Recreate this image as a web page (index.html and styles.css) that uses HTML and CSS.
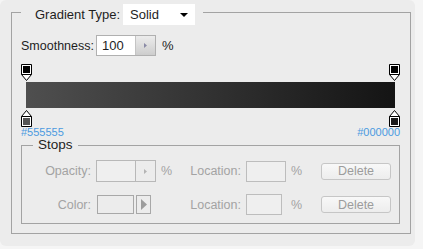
FILE: index.html
```html
<!DOCTYPE html>
<html lang="en">
<head>
  <meta charset="UTF-8">
  <title>Gradient Editor</title>
  <link rel="stylesheet" href="styles.css">
</head>
<body>

<div class="panel">
  <fieldset class="group">
    <legend class="group-title">
      <span>Gradient Type:</span>
      <div class="select">
        <span>Solid</span>
        <svg width="8" height="4" viewBox="0 0 8 4"><path d="M0 0H8L4 4Z" fill="#000"/></svg>
      </div>
    </legend>

    <div class="field-row">
      <label class="field-label">Smoothness:</label>
      <div class="spin">
        <span class="spin-value">100</span>
        <span class="spin-btn"><svg width="3" height="5" viewBox="0 0 3 5"><path d="M0 0L3 2.5L0 5Z" fill="#8a8aa6"/></svg></span>
      </div>
      <span class="unit">%</span>
    </div>

    <div class="gradient">
      <div class="markers">
        <svg width="11" height="17" viewBox="0 0 11 17">
          <path d="M0.5 0.5H10.5V10.5L5.5 16.5L0.5 10.5Z" fill="#fff" stroke="#000"/>
          <path d="M0.5 10.5H10.5" stroke="#000"/>
          <rect x="2" y="2" width="7" height="7" fill="#000"/>
        </svg>
        <svg width="11" height="17" viewBox="0 0 11 17">
          <path d="M0.5 0.5H10.5V10.5L5.5 16.5L0.5 10.5Z" fill="#fff" stroke="#000"/>
          <path d="M0.5 10.5H10.5" stroke="#000"/>
          <rect x="2" y="2" width="7" height="7" fill="#000"/>
        </svg>
      </div>
      <div class="gradient-bar"></div>
      <div class="markers bottom">
        <svg width="11" height="17" viewBox="0 0 11 17">
          <path d="M5.5 0.5L10.5 6.5V16.5H0.5V6.5Z" fill="#fff" stroke="#000"/>
          <path d="M0.5 6.5H10.5" stroke="#000"/>
          <rect x="2" y="8" width="7" height="7" fill="#555"/>
        </svg>
        <svg width="11" height="17" viewBox="0 0 11 17">
          <path d="M5.5 0.5L10.5 6.5V16.5H0.5V6.5Z" fill="#fff" stroke="#000"/>
          <path d="M0.5 6.5H10.5" stroke="#000"/>
          <rect x="2" y="8" width="7" height="7" fill="#1a1a1a"/>
        </svg>
      </div>
      <div class="stop-labels">
        <span>#555555</span>
        <span>#000000</span>
      </div>
    </div>

    <fieldset class="group stops">
      <legend class="stops-title">Stops</legend>

      <div class="stop-row">
        <span class="stop-label">Opacity:</span>
        <div class="spin disabled">
          <span class="spin-value"></span>
          <span class="spin-btn"><svg width="3" height="5" viewBox="0 0 3 5"><path d="M0 0L3 2.5L0 5Z" fill="#b4b4b4"/></svg></span>
        </div>
        <span class="stop-unit">%</span>
        <span class="stop-label">Location:</span>
        <div class="box"></div>
        <span class="stop-unit">%</span>
        <button class="delete">Delete</button>
      </div>

      <div class="stop-row">
        <span class="stop-label">Color:</span>
        <div class="swatch-group">
          <div class="swatch"></div>
          <div class="swatch-btn"><svg width="6" height="11" viewBox="0 0 6 11"><path d="M0 0L6 5.5L0 11Z" fill="#9c9c9c"/></svg></div>
        </div>
        <span class="stop-unit"></span>
        <span class="stop-label">Location:</span>
        <div class="box short"></div>
        <span class="stop-unit">%</span>
        <button class="delete">Delete</button>
      </div>
    </fieldset>
  </fieldset>
</div>

</body>
</html>
```

FILE: styles.css
```css
html, body {
  margin: 0;
  padding: 0;
  background-color: #f5f5f5;
  font-family: "Liberation Sans", Arial, sans-serif;
  font-size: 12.5px;
  color: #1e1e1e;
}

.panel {
  width: 415px;
  height: 246px;
  box-sizing: border-box;
  padding: 0 4px 0 11px;
  background-color: #ececec;
  border-radius: 6px;
}

.group {
  margin: 0;
  padding: 10px 10px 9px 9px;
  border: 1px solid #a3a3a3;
  min-width: 0;
}

.group-title {
  display: flex;
  align-items: center;
  gap: 3px;
  padding: 4px 8px 0 14px;
  font-size: 13px;
}

.select {
  width: 72px;
  height: 21px;
  box-sizing: border-box;
  padding: 0 7px;
  display: flex;
  align-items: center;
  justify-content: space-between;
  background-color: #fff;
  font-size: 13px;
}

.field-row {
  display: flex;
  align-items: center;
  height: 21px;
}

.field-label {
  width: 75px;
}

.spin {
  display: flex;
  width: 60px;
  height: 21px;
  box-sizing: border-box;
  border: 1px solid #b0b0b0;
}

.spin-value {
  flex: 1;
  background-color: #fff;
  padding-left: 5px;
  line-height: 19px;
  font-size: 13px;
}

.spin-btn {
  width: 19px;
  display: flex;
  align-items: center;
  justify-content: center;
  border-left: 1px solid #c4c4c4;
  background: linear-gradient(#ececec, #cdcdcd);
}

.unit {
  margin-left: 6px;
  font-size: 13px;
}

.markers {
  display: flex;
  justify-content: space-between;
  margin-top: 8px;
  height: 17px;
}

.markers svg {
  display: block;
}

.markers.bottom {
  margin-top: 2px;
}

.gradient-bar {
  margin: 1px 5px 0;
  height: 26px;
  background: linear-gradient(to right, #4f4f4f, #141414);
}

.stop-labels {
  display: flex;
  justify-content: space-between;
  font-size: 11px;
  line-height: 11px;
  color: #4b9ae0;
}

.stops {
  padding: 8px 0 8px 0;
  display: flex;
  flex-direction: column;
  gap: 12px;
}

.stops-title {
  margin-left: 11px;
  padding: 0 5px;
  line-height: 14px;
  font-size: 13.5px;
}

.stop-row {
  display: grid;
  grid-template-columns: 74px 60px 30px 60px 40px 35px 70px;
  align-items: center;
  height: 21px;
  color: #a3a3a3;
}

.stop-row:first-of-type {
  height: 22px;
}

.stop-row .spin {
  height: 22px;
}

.stop-label {
  text-align: right;
  padding-right: 5px;
}

.stop-unit {
  padding-left: 5px;
}

.spin.disabled {
  border-color: #b8b8b8;
}

.spin.disabled .spin-value {
  background-color: #efefef;
}

.spin.disabled .spin-btn {
  background: #ececec;
  border-left-color: #b8b8b8;
}

.box {
  height: 21px;
  width: 40px;
  box-sizing: border-box;
  border: 1px solid #bdbdbd;
  background-color: #efefef;
}

.box.short {
  width: 36px;
}

.swatch-group {
  display: flex;
  gap: 2px;
  padding-left: 1px;
}

.swatch {
  width: 37px;
  height: 19px;
  box-sizing: border-box;
  border: 1px solid #a8a8a8;
}

.swatch-btn {
  width: 15px;
  height: 19px;
  box-sizing: border-box;
  border: 1px solid #a8a8a8;
  display: flex;
  align-items: center;
  justify-content: center;
}

.delete {
  height: 17px;
  padding: 0;
  border: 1px solid #c6c6c6;
  border-radius: 3px;
  background: linear-gradient(#f8f8f8, #ededed);
  color: #9c9c9c;
  font-family: "Liberation Sans", Arial, sans-serif;
  font-size: 12.5px;
}
```
